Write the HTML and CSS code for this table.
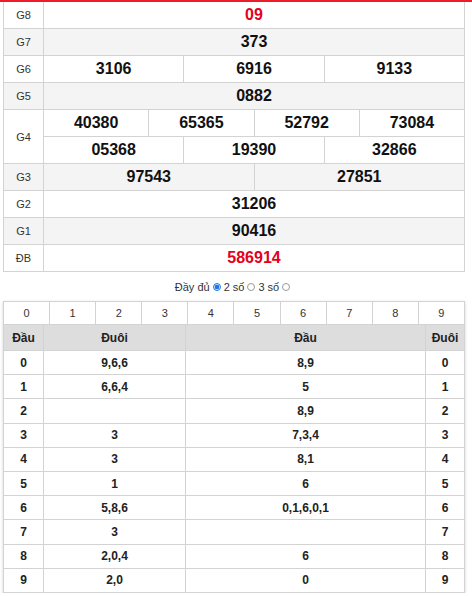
FILE: index.html
```html
<!DOCTYPE html>
<html lang="vi">
<head>
<meta charset="utf-8">
<title>Kết quả xổ số</title>
<link rel="stylesheet" href="styles.css">
</head>
<body>
<div class="topbar"></div>
<div class="wrap">
  <div class="kq">
    <div class="row"><div class="lbl">G8</div><div class="vals"><div class="v red">09</div></div></div>
    <div class="row alt"><div class="lbl">G7</div><div class="vals"><div class="v">373</div></div></div>
    <div class="row"><div class="lbl">G6</div><div class="vals"><div class="v">3106</div><div class="v">6916</div><div class="v">9133</div></div></div>
    <div class="row alt"><div class="lbl">G5</div><div class="vals"><div class="v">0882</div></div></div>
    <div class="row tall"><div class="lbl">G4</div>
      <div class="vals col">
        <div class="sub"><div class="v">40380</div><div class="v">65365</div><div class="v">52792</div><div class="v">73084</div></div>
        <div class="sub"><div class="v">05368</div><div class="v">19390</div><div class="v">32866</div></div>
      </div>
    </div>
    <div class="row alt"><div class="lbl">G3</div><div class="vals"><div class="v">97543</div><div class="v">27851</div></div></div>
    <div class="row"><div class="lbl">G2</div><div class="vals"><div class="v">31206</div></div></div>
    <div class="row alt"><div class="lbl">G1</div><div class="vals"><div class="v">90416</div></div></div>
    <div class="row"><div class="lbl">ĐB</div><div class="vals"><div class="v red">586914</div></div></div>
  </div>

  <div class="opts">
    <span>Đầy đủ</span><input type="radio" name="mode" checked><span>2 số</span><input type="radio" name="mode"><span>3 số</span><input type="radio" name="mode">
  </div>

  <div class="loto">
    <div class="digits">
      <div class="d">0</div><div class="d">1</div><div class="d">2</div><div class="d">3</div><div class="d">4</div>
      <div class="d">5</div><div class="d">6</div><div class="d">7</div><div class="d">8</div><div class="d">9</div>
    </div>
    <div class="dd">
      <div class="h">Đầu</div><div class="h">Đuôi</div><div class="h">Đầu</div><div class="h">Đuôi</div>
      <div class="k">0</div><div class="c">9,6,6</div><div class="c">8,9</div><div class="k">0</div>
      <div class="k">1</div><div class="c">6,6,4</div><div class="c">5</div><div class="k">1</div>
      <div class="k">2</div><div class="c"></div><div class="c">8,9</div><div class="k">2</div>
      <div class="k">3</div><div class="c">3</div><div class="c">7,3,4</div><div class="k">3</div>
      <div class="k">4</div><div class="c">3</div><div class="c">8,1</div><div class="k">4</div>
      <div class="k">5</div><div class="c">1</div><div class="c">6</div><div class="k">5</div>
      <div class="k">6</div><div class="c">5,8,6</div><div class="c">0,1,6,0,1</div><div class="k">6</div>
      <div class="k">7</div><div class="c">3</div><div class="c"></div><div class="k">7</div>
      <div class="k">8</div><div class="c">2,0,4</div><div class="c">6</div><div class="k">8</div>
      <div class="k">9</div><div class="c">2,0</div><div class="c">0</div><div class="k">9</div>
    </div>
  </div>
</div>
</body>
</html>
```

FILE: styles.css
```css
* { box-sizing: border-box; }

html, body {
  margin: 0;
  padding: 0;
  background: #fff;
  font-family: "Liberation Sans", Arial, sans-serif;
  color: #222;
}

.topbar {
  height: 2px;
  background: #ec1c2a;
}

.wrap {
  width: 462px;
  margin-left: 3px;
}

/* prize table */
.kq {
  border-left: 1px solid #d3d3d3;
  border-right: 1px solid #d3d3d3;
}

.row {
  display: flex;
  height: 27px;
  border-bottom: 1px solid #d3d3d3;
  background: #fff;
}

.row.alt { background: #f4f4f4; }
.row.tall { height: 54px; }

.lbl {
  width: 40px;
  flex: none;
  border-right: 1px solid #d3d3d3;
  display: flex;
  align-items: center;
  justify-content: center;
  font-size: 11px;
  color: #333;
}

.vals {
  flex: 1;
  display: flex;
}

.vals.col { flex-direction: column; }

.sub {
  flex: 1;
  display: flex;
}

.sub + .sub { border-top: 1px solid #d3d3d3; }

.v {
  flex: 1 1 0;
  display: flex;
  align-items: center;
  justify-content: center;
  font-size: 16px;
  font-weight: bold;
  color: #111;
}

.v + .v { border-left: 1px solid #d3d3d3; }

.v.red { color: #e5001b; }

/* options */
.opts {
  height: 29px;
  display: flex;
  align-items: center;
  justify-content: center;
  font-size: 11px;
  color: #333;
}

.opts input {
  appearance: none;
  -webkit-appearance: none;
  width: 8px;
  height: 8px;
  margin: 0 3px;
  border: 1px solid #9a9a9a;
  border-radius: 50%;
  background: #fff;
}

.opts input:checked {
  border-color: #1f77e6;
  background: radial-gradient(circle, #1f77e6 0 2px, #cfe2fb 2.5px);
}

/* loto table */
.loto {
  border: 1px solid #d3d3d3;
  box-shadow: 0 1px 3px rgba(0, 0, 0, 0.18);
}

.digits {
  display: flex;
  height: 23px;
  border-bottom: 1px solid #d3d3d3;
}

.d {
  flex: 1 1 0;
  display: flex;
  align-items: center;
  justify-content: center;
  font-size: 11px;
  color: #333;
}

.d + .d { border-left: 1px solid #d3d3d3; }

.dd {
  display: grid;
  grid-template-columns: 39px 141px 239px 1fr;
  grid-template-rows: 25px;
  grid-auto-rows: 23.2px;
  gap: 1px;
  background: #d3d3d3;
}

.dd > div {
  display: flex;
  align-items: center;
  justify-content: center;
  background: #fff;
  font-size: 12px;
  font-weight: bold;
  color: #222;
}

.dd > .h {
  background: #dddddd;
  color: #222;
}
```
